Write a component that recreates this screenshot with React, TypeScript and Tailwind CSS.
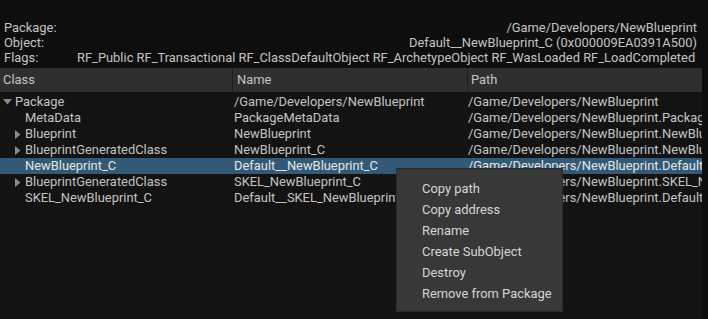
import React from 'react';

const font = { fontFamily: 'Roboto, "Noto Sans", sans-serif' };

interface Row {
  cls: string;
  name: string;
  path: string;
  depth: number;
  arrow?: 'down' | 'right';
  selected?: boolean;
}

const rows: Row[] = [
  { cls: 'Package', name: '/Game/Developers/NewBlueprint', path: '/Game/Developers/NewBlueprint', depth: 0, arrow: 'down' },
  { cls: 'MetaData', name: 'PackageMetaData', path: '/Game/Developers/NewBlueprint.PackageMetaData', depth: 1 },
  { cls: 'Blueprint', name: 'NewBlueprint', path: '/Game/Developers/NewBlueprint.NewBlueprint', depth: 1, arrow: 'right' },
  { cls: 'BlueprintGeneratedClass', name: 'NewBlueprint_C', path: '/Game/Developers/NewBlueprint.NewBlueprint_C', depth: 1, arrow: 'right' },
  { cls: 'NewBlueprint_C', name: 'Default__NewBlueprint_C', path: '/Game/Developers/NewBlueprint.Default__NewBlueprint_C', depth: 1, selected: true },
  { cls: 'BlueprintGeneratedClass', name: 'SKEL_NewBlueprint_C', path: '/Game/Developers/NewBlueprint.SKEL_NewBlueprint_C', depth: 1, arrow: 'right' },
  { cls: 'SKEL_NewBlueprint_C', name: 'Default__SKEL_NewBlueprint_C', path: '/Game/Developers/NewBlueprint.Default__SKEL_NewBlueprint_C', depth: 1 },
];

const menuItems = ['Copy path', 'Copy address', 'Rename', 'Create SubObject', 'Destroy', 'Remove from Package'];

const Arrow = ({ dir }: { dir: 'down' | 'right' }) =>
  dir === 'down' ? (
    <svg width="9" height="6" viewBox="0 0 9 6" className="shrink-0">
      <path d="M0 0 L9 0 L4.5 5.5 Z" fill="#8a8a8a" />
    </svg>
  ) : (
    <svg width="6" height="9" viewBox="0 0 6 9" className="shrink-0">
      <path d="M0 0 L5.5 4.5 L0 9 Z" fill="#8a8a8a" />
    </svg>
  );

export default function App() {
  return (
    <div className="relative w-[708px] h-[319px] overflow-hidden bg-[#0e0e0e] text-[12.9px] text-[#c4c4c4]" style={font}>
      {/* Object info */}
      <div className="pt-[20px] pl-[4px] pr-[11px] leading-[15px]">
        <div className="flex justify-between">
          <span>Package:</span>
          <span>/Game/Developers/NewBlueprint</span>
        </div>
        <div className="flex justify-between">
          <span>Object:</span>
          <span>Default__NewBlueprint_C (0x000009EA0391A500)</span>
        </div>
        <div className="flex">
          <span className="w-[73px] shrink-0">Flags:</span>
          <span className="whitespace-nowrap">
            RF_Public RF_Transactional RF_ClassDefaultObject RF_ArchetypeObject RF_WasLoaded RF_LoadCompleted
          </span>
        </div>
      </div>

      {/* Table */}
      <div className="mt-[3px] h-[251px] w-[702px] bg-[#131313] overflow-hidden">
        <div className="flex h-[24px] bg-[#2f2f2f] items-center text-[#c4c4c4]">
          <div className="w-[233px] pl-[3px] h-full flex items-center border-r border-[#1c1c1c]">Class</div>
          <div className="w-[235px] pl-[4px] h-full flex items-center border-r border-[#1c1c1c]">Name</div>
          <div className="flex-1 pl-[3px] h-full flex items-center">Path</div>
        </div>
        <div className="pt-[2px]">
          {rows.map((r, i) => (
            <div
              key={i}
              className={`flex h-[16px] items-center whitespace-nowrap ${r.selected ? 'bg-[#325a76] text-[#e6e6e6]' : ''}`}
            >
              <div className="w-[234px] flex items-center overflow-hidden">
                {r.depth === 0 ? (
                  <div className="w-[15px] pl-[3px] flex items-center">
                    {r.arrow && <Arrow dir={r.arrow} />}
                  </div>
                ) : (
                  <div className="w-[25px] pl-[15px] flex items-center">
                    {r.arrow && <Arrow dir={r.arrow} />}
                  </div>
                )}
                <span>{r.cls}</span>
              </div>
              <div className="w-[234px] overflow-hidden">{r.name}</div>
              <div className="flex-1 overflow-hidden">{r.path}</div>
            </div>
          ))}
        </div>
      </div>

      {/* Context menu */}
      <div className="absolute left-[396px] top-[168px] w-[167px] h-[144px] bg-[#383838] border border-[#2b2b2b] pt-[9px] pl-[25px] text-[#d6d6d6] text-[12.9px]">
        {menuItems.map((m) => (
          <div key={m} className="h-[21px] flex items-center">
            {m}
          </div>
        ))}
      </div>
    </div>
  );
}
